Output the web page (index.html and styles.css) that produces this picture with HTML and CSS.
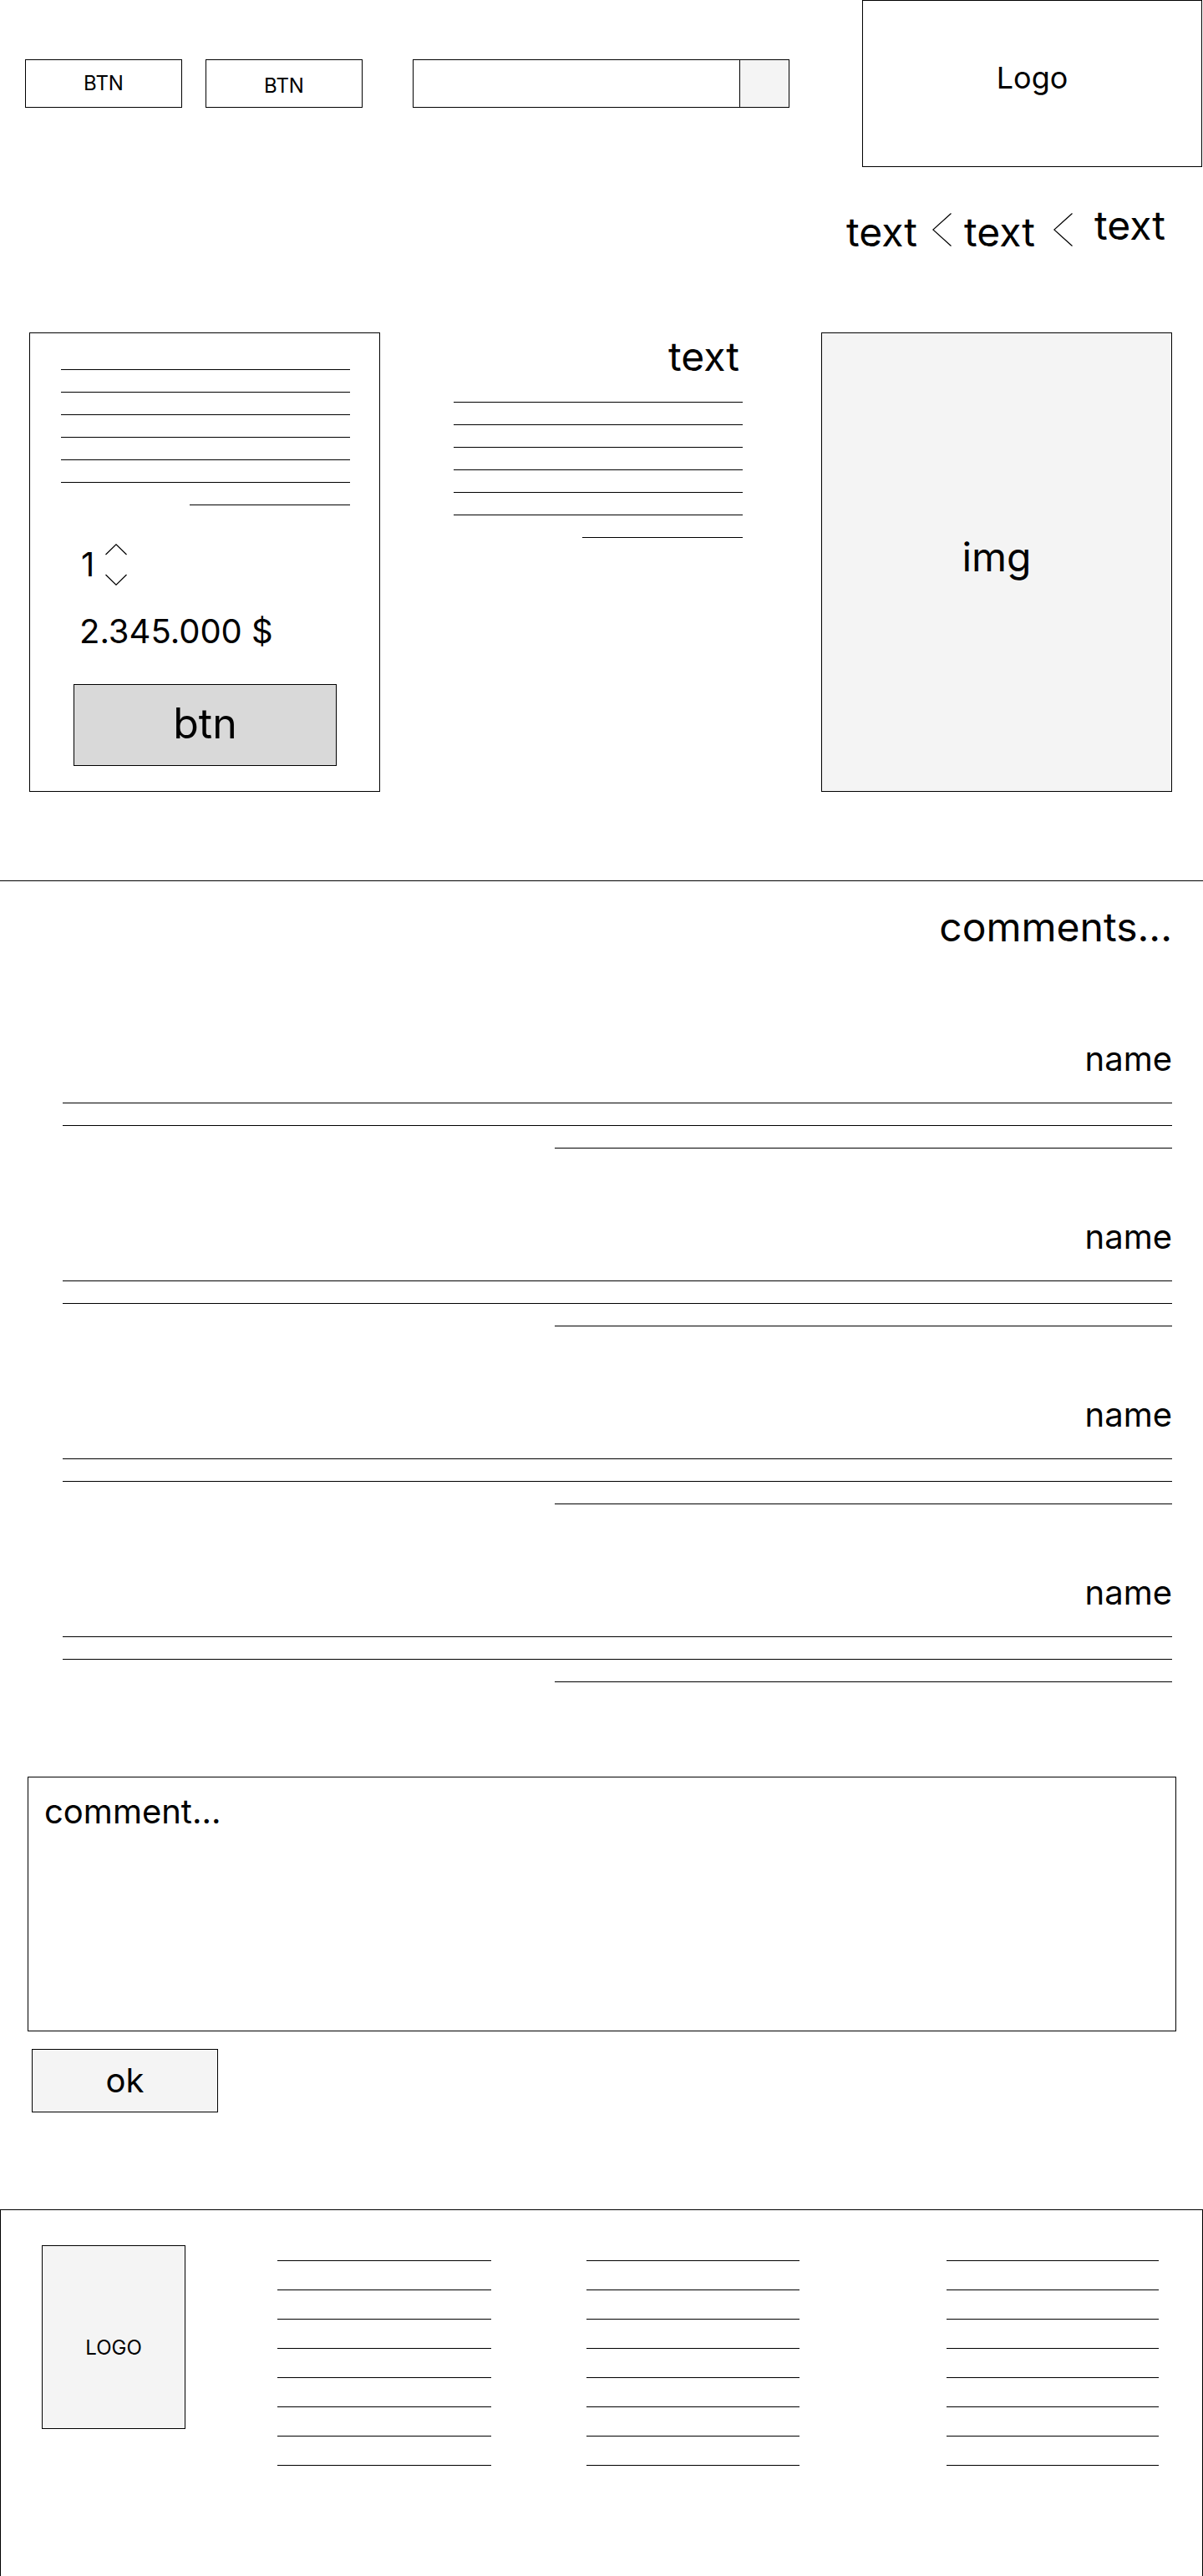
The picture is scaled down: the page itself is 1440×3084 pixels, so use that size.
FILE: index.html
```html
<!DOCTYPE html>
<html lang="en">
<head>
<meta charset="utf-8">
<title>Product page wireframe</title>
<link rel="stylesheet" href="styles.css">
</head>
<body>
<div class="page">
  <header class="header">
    <div class="header__left">
      <button class="btn-small">BTN</button>
      <button class="btn-small btn-small--low">BTN</button>
      <div class="search">
        <div class="search__input"></div>
        <div class="search__btn"></div>
      </div>
    </div>
    <div class="logo">Logo</div>
  </header>

  <nav class="crumbs">
    <span class="crumb">text</span>
    <svg class="chev chev--a" viewBox="0 0 23 40" width="23" height="40"><polyline points="22.5,0.5 0.8,20 22.5,39.5" fill="none" stroke="#000" stroke-width="1.2"/></svg>
    <span class="crumb">text</span>
    <svg class="chev chev--b" viewBox="0 0 23 40" width="23" height="40"><polyline points="22.5,0.5 0.8,20 22.5,39.5" fill="none" stroke="#000" stroke-width="1.2"/></svg>
    <span class="crumb crumb--raised">text</span>
  </nav>

  <section class="product">
    <div class="card">
      <div class="lines lines--card">
        <div class="line"></div>
        <div class="line"></div>
        <div class="line"></div>
        <div class="line"></div>
        <div class="line"></div>
        <div class="line"></div>
        <div class="line line--short"></div>
      </div>
      <div class="stepper">
        <span class="stepper__value">1</span>
        <svg class="stepper__arrows" viewBox="0 0 26 50" width="26" height="50">
          <polyline points="0.5,13 13,0.8 25.5,13" fill="none" stroke="#000" stroke-width="1.2"/>
          <polyline points="0.5,37 13,49.2 25.5,37" fill="none" stroke="#000" stroke-width="1.2"/>
        </svg>
      </div>
      <div class="price">2.345.000 $</div>
      <button class="btn-main">btn</button>
    </div>

    <div class="desc">
      <div class="desc__title">text</div>
      <div class="lines lines--desc">
        <div class="line"></div>
        <div class="line"></div>
        <div class="line"></div>
        <div class="line"></div>
        <div class="line"></div>
        <div class="line"></div>
        <div class="line line--short"></div>
      </div>
    </div>

    <div class="img-box">img</div>
  </section>

  <hr class="divider">

  <section class="comments">
    <h2 class="comments__title">comments...</h2>
    <div class="comment">
      <div class="comment__name">name</div>
      <div class="line"></div>
      <div class="line"></div>
      <div class="line line--half"></div>
    </div>
    <div class="comment">
      <div class="comment__name">name</div>
      <div class="line"></div>
      <div class="line"></div>
      <div class="line line--half"></div>
    </div>
    <div class="comment">
      <div class="comment__name">name</div>
      <div class="line"></div>
      <div class="line"></div>
      <div class="line line--half"></div>
    </div>
    <div class="comment">
      <div class="comment__name">name</div>
      <div class="line"></div>
      <div class="line"></div>
      <div class="line line--half"></div>
    </div>
  </section>

  <section class="reply">
    <div class="reply__box">comment...</div>
    <button class="btn-ok">ok</button>
  </section>

  <footer class="footer">
    <div class="footer__logo">LOGO</div>
    <div class="footer__col footer__col--1">
      <div class="line"></div><div class="line"></div><div class="line"></div><div class="line"></div>
      <div class="line"></div><div class="line"></div><div class="line"></div><div class="line"></div>
    </div>
    <div class="footer__col footer__col--2">
      <div class="line"></div><div class="line"></div><div class="line"></div><div class="line"></div>
      <div class="line"></div><div class="line"></div><div class="line"></div><div class="line"></div>
    </div>
    <div class="footer__col footer__col--3">
      <div class="line"></div><div class="line"></div><div class="line"></div><div class="line"></div>
      <div class="line"></div><div class="line"></div><div class="line"></div><div class="line"></div>
    </div>
  </footer>
</div>
</body>
</html>
```

FILE: styles.css
```css
* { box-sizing: border-box; }

html, body {
  margin: 0;
  padding: 0;
  background: #fff;
}

body {
  font-family: Inter, "Noto Sans", "Liberation Sans", sans-serif;
  color: #000;
}

.page {
  width: 1440px;
  height: 3084px;
  overflow: hidden;
}

/* ---------- header ---------- */
.header {
  display: flex;
  align-items: center;
  height: 200px;
}

.header__left {
  display: flex;
  align-items: center;
  padding-left: 30px;
}

.btn-small {
  width: 188px;
  height: 58px;
  margin: 0 28px 0 0;
  padding: 0;
  border: 1px solid #000;
  background: #fff;
  font-family: inherit;
  font-size: 24px;
  line-height: 24px;
  color: #000;
}

.btn-small--low {
  padding-top: 6px;
  margin-right: 60px;
}

.search {
  display: flex;
  width: 451px;
  height: 58px;
  border: 1px solid #000;
}

.search__input {
  flex: 1;
  background: #fff;
}

.search__btn {
  width: 59px;
  border-left: 1px solid #000;
  background: #f4f4f4;
}

.logo {
  margin-left: auto;
  margin-right: 1px;
  width: 407px;
  height: 200px;
  border: 1px solid #000;
  display: flex;
  align-items: center;
  justify-content: center;
  font-size: 36px;
  padding-bottom: 14px;
}

/* ---------- breadcrumbs ---------- */
.crumbs {
  display: flex;
  justify-content: flex-end;
  align-items: flex-start;
  height: 48px;
  margin-top: 54px;
  padding-right: 45px;
}

.crumb {
  font-size: 48px;
  line-height: 48px;
}

.crumb--raised {
  margin-top: -8px;
}

.chev {
  display: block;
  flex: none;
  margin-top: 1px;
}

.chev--a { margin-left: 18px; margin-right: 15px; }
.chev--b { margin-left: 22px; margin-right: 26px; }

/* ---------- product ---------- */
.product {
  display: flex;
  align-items: flex-start;
  margin-top: 96px;
}

.line {
  height: 1px;
  background: #000;
}

.lines {
  display: flex;
  flex-direction: column;
  align-items: flex-end;
  gap: 26px;
}

.lines .line { width: 100%; }
.lines .line--short { width: 192px; }

.card {
  margin-left: 35px;
  width: 420px;
  height: 550px;
  border: 1px solid #000;
  padding: 43px 35px 0 37px;
}

.stepper {
  display: flex;
  align-items: center;
  margin-top: 46px;
  padding-left: 24px;
}

.stepper__value {
  font-size: 40px;
  line-height: 40px;
}

.stepper__arrows {
  display: block;
  margin-left: 13px;
}

.price {
  margin-top: 35px;
  padding-left: 22px;
  font-size: 40px;
  line-height: 40px;
  white-space: nowrap;
}

.btn-main {
  display: flex;
  align-items: center;
  justify-content: center;
  margin: 43px 0 0 15px;
  width: 315px;
  height: 98px;
  border: 1px solid #000;
  background: #d9d9d9;
  font-family: inherit;
  font-size: 50px;
  color: #000;
  padding: 0 0 4px 0;
}

.desc {
  margin-left: 88px;
  width: 346px;
}

.desc__title {
  margin-top: 5px;
  padding-right: 4px;
  text-align: right;
  font-size: 48px;
  line-height: 48px;
}

.lines--desc {
  margin-top: 30px;
}

.img-box {
  margin-left: 94px;
  width: 420px;
  height: 550px;
  border: 1px solid #000;
  background: #f4f4f4;
  display: flex;
  align-items: center;
  justify-content: center;
  font-size: 48px;
  padding-bottom: 14px;
}

/* ---------- comments ---------- */
.divider {
  margin: 106px 0 0 0;
  border: 0;
  height: 1px;
  background: #000;
}

.comments {
  padding: 0 37px 0 75px;
}

.comments__title {
  margin: 31px 0 0 0;
  text-align: right;
  font-weight: 400;
  font-size: 48px;
  line-height: 48px;
}

.comment {
  display: flex;
  flex-direction: column;
  align-items: flex-end;
  margin-top: 86px;
}

.comment:first-of-type {
  margin-top: 114px;
}

.comment__name {
  font-size: 40px;
  line-height: 40px;
  margin-bottom: 32px;
}

.comment .line {
  width: 100%;
  margin-bottom: 26px;
}

.comment .line--half {
  width: 739px;
  margin-bottom: 0;
}

/* ---------- reply ---------- */
.reply {
  margin-top: 113px;
}

.reply__box {
  margin-left: 33px;
  width: 1375px;
  height: 305px;
  border: 1px solid #000;
  padding: 21px 0 0 19px;
  font-size: 40px;
  line-height: 40px;
}

.btn-ok {
  display: flex;
  align-items: center;
  justify-content: center;
  margin: 21px 0 0 38px;
  width: 223px;
  height: 76px;
  border: 1px solid #000;
  background: #f4f4f4;
  font-family: inherit;
  font-size: 40px;
  color: #000;
  padding: 0 0 2px 0;
}

/* ---------- footer ---------- */
.footer {
  display: flex;
  align-items: flex-start;
  margin-top: 116px;
  width: 1440px;
  height: 441px;
  border: 1px solid #000;
  padding: 42px 0 0 49px;
}

.footer__logo {
  width: 172px;
  height: 220px;
  border: 1px solid #000;
  background: #f4f4f4;
  display: flex;
  align-items: center;
  justify-content: center;
  font-size: 24px;
  padding-top: 24px;
}

.footer__col {
  display: flex;
  flex-direction: column;
  gap: 34px;
  margin-top: 18px;
}

.footer__col .line { width: 100%; }

.footer__col--1 { margin-left: 110px; width: 256px; }
.footer__col--2 { margin-left: 114px; width: 255px; }
.footer__col--3 { margin-left: 176px; width: 254px; }
```
